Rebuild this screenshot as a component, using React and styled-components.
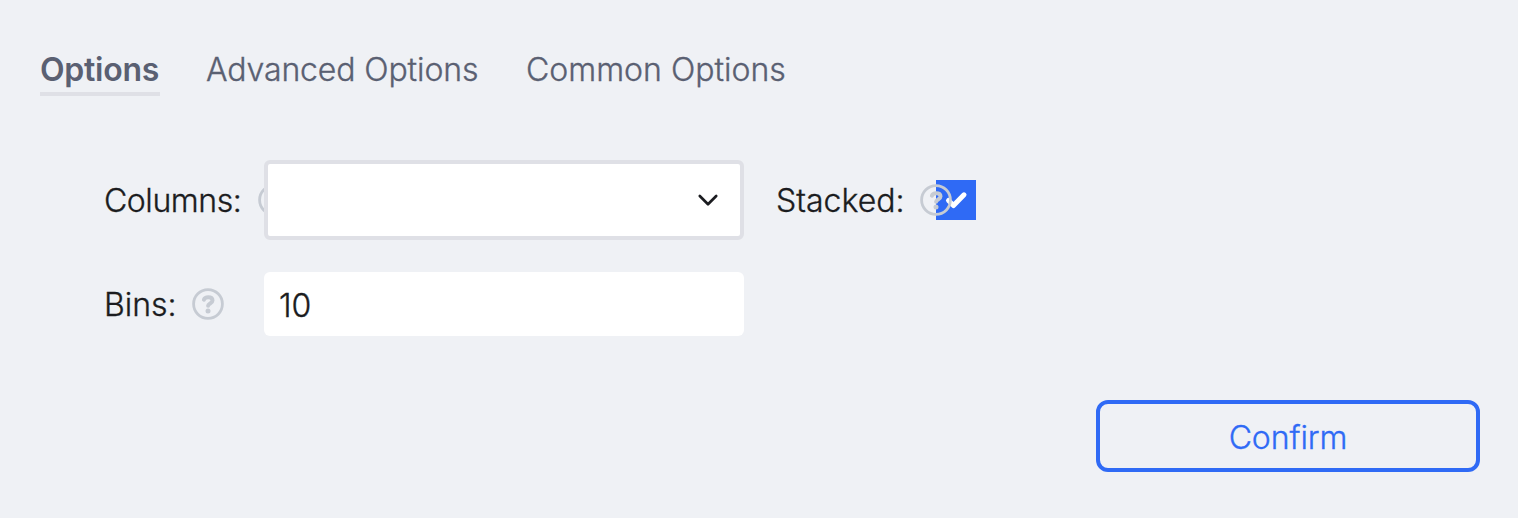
import React from "react";
import styled, { createGlobalStyle } from "styled-components";

const GlobalStyle = createGlobalStyle`
  * { box-sizing: border-box; }
  body {
    margin: 0;
    background: #eff1f5;
    font-family: Inter, "Liberation Sans", sans-serif;
    font-size: 32px;
    font-weight: 300;
    -webkit-text-stroke: 0.35px currentColor;
    color: #1b1c20;
  }
`;

const Panel = styled.main`
  display: flex;
  flex-direction: column;
  width: 1518px;
  height: 518px;
  padding: 48px 38px 46px 40px;
  background: #eff1f5;
`;

const Tabs = styled.nav`
  display: flex;
  gap: 46px;
  height: 48px;
`;

const Tab = styled.span`
  width: ${(p) => p.$width}px;
  height: 48px;
  line-height: 44px;
  white-space: nowrap;
  color: #5a6072;
  font-weight: ${(p) => (p.$active ? 600 : 300)};
  -webkit-text-stroke-width: ${(p) => (p.$active ? 0 : 0.35)}px;
  letter-spacing: ${(p) => p.$spacing || 0}px;
  border-bottom: 4px solid ${(p) => (p.$active ? "#dfe0e6" : "transparent")};
`;

const Form = styled.div`
  display: flex;
  flex-direction: column;
  gap: 32px;
  margin-top: 64px;
  padding-left: 64px;
`;

const Row = styled.div`
  display: flex;
  align-items: center;
  height: ${(p) => p.$height}px;
`;

const Label = styled.label`
  display: flex;
  align-items: center;
  flex: none;
  width: 160px;
  line-height: 42px;
`;

const LabelText = styled.span`
  flex: none;
  width: ${(p) => p.$width}px;
  padding-top: 2px;
  white-space: nowrap;
  letter-spacing: ${(p) => p.$spacing || 0}px;
`;

const HelpSvg = styled.svg`
  flex: none;
  width: 32px;
  height: 32px;
  z-index: ${(p) => (p.$raised ? 1 : 0)};
`;

const Select = styled.div`
  display: flex;
  align-items: center;
  justify-content: flex-end;
  width: 480px;
  height: 80px;
  padding-right: 16px;
  margin-right: 32px;
  background: #fff;
  border: 4px solid #dfe0e6;
  border-radius: 6px;
  z-index: 1;
`;

const Input = styled.input`
  width: 480px;
  height: 64px;
  padding: 2px 15px 0;
  border: 0;
  border-radius: 6px;
  outline: 0;
  background: #fff;
  color: #1b1c20;
  font: inherit;
  letter-spacing: 0;
`;

const Checkbox = styled.span`
  width: 40px;
  height: 40px;
  background: #2f6af5;

  svg { display: block; }
`;

const Button = styled.button`
  width: 384px;
  height: 72px;
  margin-top: auto;
  align-self: flex-end;
  padding: 2px 0 0;
  border: 4px solid #2f6af5;
  border-radius: 12px;
  background: transparent;
  color: #2f6af5;
  font: inherit;
  letter-spacing: -0.1px;
`;

function Help({ raised }) {
  return (
    <HelpSvg viewBox="0 0 32 32" fill="none" $raised={raised}>
      <circle cx="16" cy="16" r="14.4" stroke="#c6cbd3" strokeWidth="2.8" />
      <path d="M11.9 11.7C12.6 9.9 14 9.2 16.2 9.2c2.6 0 4.3 1.2 4.3 3.2 0 3-4.4 3-4.4 5.4" stroke="#c6cbd3" strokeWidth="4" strokeLinecap="round" strokeLinejoin="round" />
      <circle cx="16" cy="23.1" r="2.5" fill="#c6cbd3" />
    </HelpSvg>
  );
}

export default function App() {
  return (
    <>
      <GlobalStyle />
      <Panel>
        <Tabs>
          <Tab $active $width={120} $spacing={-0.25}>Options</Tab>
          <Tab $width={274} $spacing={-0.12}>Advanced Options</Tab>
          <Tab $width={262}>Common Options</Tab>
        </Tabs>
        <Form>
          <Row $height={80}>
            <Label><LabelText $width={154} $spacing={-0.45}>Columns:</LabelText><Help /></Label>
            <Select>
              <svg width="32" height="32" viewBox="0 0 32 32" fill="none">
                <path d="M7.8 12l8.2 8.2 8.2-8.2" stroke="#1b1c20" strokeWidth="2.7" strokeLinecap="round" strokeLinejoin="round" />
              </svg>
            </Select>
            <Label><LabelText $width={144}>Stacked:</LabelText><Help raised /></Label>
            <Checkbox>
              <svg width="40" height="40" viewBox="0 0 40 40" fill="none">
                <path d="M12.5 20.5l5 5L28 14.8" stroke="#fff" strokeWidth="5" strokeLinecap="round" strokeLinejoin="round" />
              </svg>
            </Checkbox>
          </Row>
          <Row $height={64}>
            <Label><LabelText $width={88}>Bins:</LabelText><Help /></Label>
            <Input defaultValue="10" />
          </Row>
        </Form>
        <Button>Confirm</Button>
      </Panel>
    </>
  );
}
